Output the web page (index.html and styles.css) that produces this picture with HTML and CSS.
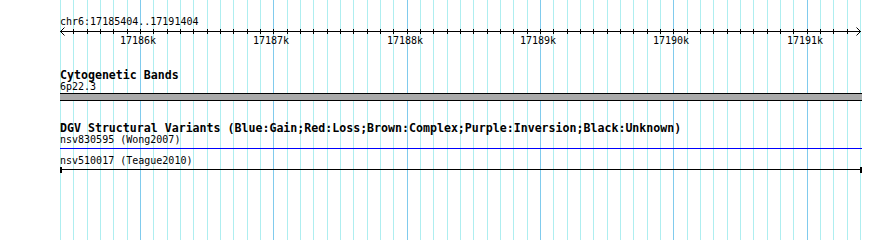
FILE: index.html
```html
<!DOCTYPE html>
<html>
<head>
<meta charset="utf-8">
<link rel="stylesheet" href="styles.css">
</head>
<body>
<div class="page">
  <svg class="grid" width="890" height="240" viewBox="0 0 890 240" shape-rendering="crispEdges">
    <g class="minor">
      <line x1="60.5" y1="0" x2="60.5" y2="240"/><line x1="73.5" y1="0" x2="73.5" y2="240"/><line x1="87.5" y1="0" x2="87.5" y2="240"/><line x1="100.5" y1="0" x2="100.5" y2="240"/><line x1="113.5" y1="0" x2="113.5" y2="240"/><line x1="127.5" y1="0" x2="127.5" y2="240"/>
      <line x1="153.5" y1="0" x2="153.5" y2="240"/><line x1="167.5" y1="0" x2="167.5" y2="240"/><line x1="180.5" y1="0" x2="180.5" y2="240"/><line x1="193.5" y1="0" x2="193.5" y2="240"/><line x1="207.5" y1="0" x2="207.5" y2="240"/><line x1="220.5" y1="0" x2="220.5" y2="240"/><line x1="233.5" y1="0" x2="233.5" y2="240"/><line x1="247.5" y1="0" x2="247.5" y2="240"/><line x1="260.5" y1="0" x2="260.5" y2="240"/>
      <line x1="287.5" y1="0" x2="287.5" y2="240"/><line x1="300.5" y1="0" x2="300.5" y2="240"/><line x1="313.5" y1="0" x2="313.5" y2="240"/><line x1="327.5" y1="0" x2="327.5" y2="240"/><line x1="340.5" y1="0" x2="340.5" y2="240"/><line x1="353.5" y1="0" x2="353.5" y2="240"/><line x1="367.5" y1="0" x2="367.5" y2="240"/><line x1="380.5" y1="0" x2="380.5" y2="240"/><line x1="393.5" y1="0" x2="393.5" y2="240"/>
      <line x1="420.5" y1="0" x2="420.5" y2="240"/><line x1="433.5" y1="0" x2="433.5" y2="240"/><line x1="447.5" y1="0" x2="447.5" y2="240"/><line x1="460.5" y1="0" x2="460.5" y2="240"/><line x1="473.5" y1="0" x2="473.5" y2="240"/><line x1="487.5" y1="0" x2="487.5" y2="240"/><line x1="500.5" y1="0" x2="500.5" y2="240"/><line x1="513.5" y1="0" x2="513.5" y2="240"/><line x1="527.5" y1="0" x2="527.5" y2="240"/>
      <line x1="553.5" y1="0" x2="553.5" y2="240"/><line x1="567.5" y1="0" x2="567.5" y2="240"/><line x1="580.5" y1="0" x2="580.5" y2="240"/><line x1="593.5" y1="0" x2="593.5" y2="240"/><line x1="607.5" y1="0" x2="607.5" y2="240"/><line x1="620.5" y1="0" x2="620.5" y2="240"/><line x1="633.5" y1="0" x2="633.5" y2="240"/><line x1="647.5" y1="0" x2="647.5" y2="240"/><line x1="660.5" y1="0" x2="660.5" y2="240"/>
      <line x1="687.5" y1="0" x2="687.5" y2="240"/><line x1="700.5" y1="0" x2="700.5" y2="240"/><line x1="713.5" y1="0" x2="713.5" y2="240"/><line x1="727.5" y1="0" x2="727.5" y2="240"/><line x1="740.5" y1="0" x2="740.5" y2="240"/><line x1="753.5" y1="0" x2="753.5" y2="240"/><line x1="767.5" y1="0" x2="767.5" y2="240"/><line x1="780.5" y1="0" x2="780.5" y2="240"/><line x1="793.5" y1="0" x2="793.5" y2="240"/>
      <line x1="820.5" y1="0" x2="820.5" y2="240"/><line x1="833.5" y1="0" x2="833.5" y2="240"/><line x1="847.5" y1="0" x2="847.5" y2="240"/><line x1="860.5" y1="0" x2="860.5" y2="240"/>
    </g>
    <g class="major">
      <line x1="140.5" y1="0" x2="140.5" y2="240"/><line x1="273.5" y1="0" x2="273.5" y2="240"/><line x1="407.5" y1="0" x2="407.5" y2="240"/><line x1="540.5" y1="0" x2="540.5" y2="240"/><line x1="673.5" y1="0" x2="673.5" y2="240"/><line x1="807.5" y1="0" x2="807.5" y2="240"/>
    </g>
  </svg>

  <svg class="ruler" width="890" height="50" viewBox="0 0 890 50" shape-rendering="crispEdges">
    <text class="rtext" x="60" y="25">chr6:17185404..17191404</text>
    <line class="rl" x1="60" y1="31.5" x2="861" y2="31.5"/>
    <polyline class="rl" points="64.5,27.5 60.5,31.5 64.5,35.5" shape-rendering="auto"/>
    <polyline class="rl" points="856.5,27.5 860.5,31.5 856.5,35.5" shape-rendering="auto"/>
    <path class="rl" d="M73.5 29v5M87.5 29v5M100.5 29v5M113.5 29v5M127.5 29v5M140.5 29v5M153.5 29v5M167.5 29v5M180.5 29v5M193.5 29v5M207.5 29v5M220.5 29v5M233.5 29v5M247.5 29v5M260.5 29v5M273.5 29v5M287.5 29v5M300.5 29v5M313.5 29v5M327.5 29v5M340.5 29v5M353.5 29v5M367.5 29v5M380.5 29v5M393.5 29v5M407.5 29v5M420.5 29v5M433.5 29v5M447.5 29v5M460.5 29v5M473.5 29v5M487.5 29v5M500.5 29v5M513.5 29v5M527.5 29v5M540.5 29v5M553.5 29v5M567.5 29v5M580.5 29v5M593.5 29v5M607.5 29v5M620.5 29v5M633.5 29v5M647.5 29v5M660.5 29v5M673.5 29v5M687.5 29v5M700.5 29v5M713.5 29v5M727.5 29v5M740.5 29v5M753.5 29v5M767.5 29v5M780.5 29v5M793.5 29v5M807.5 29v5M820.5 29v5M833.5 29v5M847.5 29v5"/>
    <text class="rtext" x="120" y="44">17186k</text>
    <text class="rtext" x="253" y="44">17187k</text>
    <text class="rtext" x="387" y="44">17188k</text>
    <text class="rtext" x="520" y="44">17189k</text>
    <text class="rtext" x="653" y="44">17190k</text>
    <text class="rtext" x="787" y="44">17191k</text>
  </svg>

  <section class="track track-cyto">
    <div class="title">Cytogenetic Bands</div>
    <div class="label">6p22.3</div>
    <div class="band"></div>
  </section>

  <section class="track track-dgv">
    <div class="title">DGV Structural Variants (Blue:Gain;Red:Loss;Brown:Complex;Purple:Inversion;Black:Unknown)</div>
    <div class="feature">
      <div class="label">nsv830595 (Wong2007)</div>
      <div class="seg seg-gain"></div>
    </div>
    <div class="feature">
      <div class="label">nsv510017 (Teague2010)</div>
      <div class="seg seg-unknown"><span class="cap"></span><span class="cap"></span></div>
    </div>
  </section>
</div>
</body>
</html>
```

FILE: styles.css
```css
html, body {
  margin: 0;
  padding: 0;
  background: #ffffff;
}

.page {
  position: relative;
  isolation: isolate;
  width: 890px;
  height: 240px;
  overflow: hidden;
  font-family: "DejaVu Sans Mono", "Liberation Mono", monospace;
  color: #000000;
}

.grid {
  position: absolute;
  left: 0;
  top: 0;
  z-index: -1;
}

.grid .minor line {
  stroke: #aeeef0;
  stroke-width: 1;
}

.grid .major line {
  stroke: #80cbed;
  stroke-width: 1;
}

.ruler {
  display: block;
}

.rl {
  stroke: #000000;
  stroke-width: 1;
  fill: none;
}

.rtext {
  font-family: "DejaVu Sans Mono", "Liberation Mono", monospace;
  font-size: 10px;
  fill: #000000;
}

.track {
  padding-left: 60px;
}

.track-cyto {
  padding-top: 19px;
}

.track-dgv {
  padding-top: 21px;
}

.title {
  font-weight: bold;
  font-size: 11.6px;
  line-height: 12px;
  height: 12px;
  white-space: nowrap;
}

.label {
  font-size: 10px;
  line-height: 11px;
  height: 11px;
  white-space: nowrap;
}

.band {
  width: 802px;
  height: 6px;
  margin-top: 1px;
  background: #aaaaaa;
  border-top: 1px solid #000000;
  border-bottom: 1px solid #000000;
}

.feature:first-of-type .label {
  margin-top: 1px;
}

.feature + .feature {
  margin-top: 6px;
}

.seg {
  width: 802px;
  height: 1px;
  margin-top: 3px;
}

.seg-gain {
  background: #0000ff;
}

.seg-unknown {
  background: #000000;
  display: flex;
  justify-content: space-between;
  align-items: flex-start;
}

.cap {
  width: 2px;
  height: 6px;
  margin-top: -2px;
  background: #000000;
  flex: none;
}
```
